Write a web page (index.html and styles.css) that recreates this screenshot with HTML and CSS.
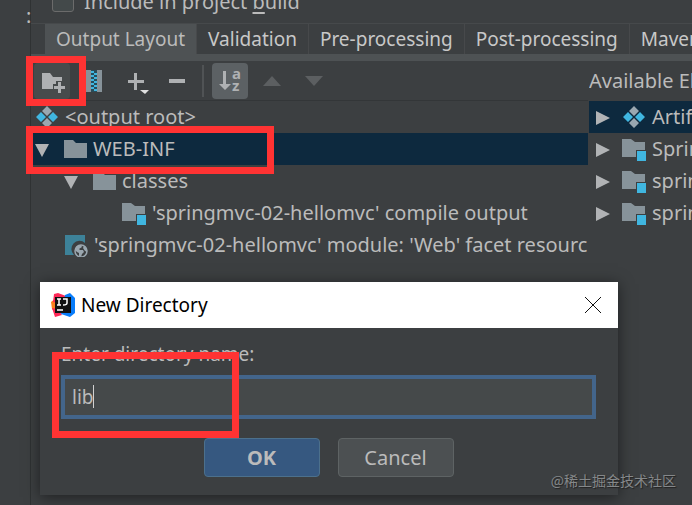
FILE: index.html
```html
<!DOCTYPE html>
<html lang="en">
<head>
    <meta charset="UTF-8">
    <meta name="viewport" content="width=device-width, initial-scale=1.0">
    <title>Project Structure</title>
    <link rel="stylesheet" href="styles.css">
</head>
<body>
    <svg class="sprite" aria-hidden="true">
        <symbol id="folder" viewBox="0 0 24 24">
            <path fill="#87939a" d="M1 3h9l3 3h11v15H1z"/>
        </symbol>
        <symbol id="module" viewBox="0 0 24 24">
            <path fill="#87939a" d="M0 2h9l4 3h10v8h-9v7H0z"/>
            <path fill="#40b6e0" d="M15 14h9v10h-9z"/>
        </symbol>
        <symbol id="artifact" viewBox="0 0 24 24">
            <path fill="#9aa7b0" d="M12 1l5 5-5 5-5-5zM12 13l5 5-5 5-5-5z"/>
            <path fill="#40b6e0" d="M6 7l5 5-5 5-5-5zM18 7l5 5-5 5-5-5z"/>
        </symbol>
        <symbol id="facet" viewBox="0 0 24 24">
            <path fill="#3d8299" d="M1 2h20v8a8 8 0 0 0-11 12H1z"/>
            <circle cx="17" cy="18" r="6" fill="#3c3f41" stroke="#9aa7b0" stroke-width="1.5"/>
            <path fill="#9aa7b0" d="M11 17l2-4 4-1 1 2-3 2 1 1h3l1 2-2 2-1 3-2-1v-3l-2-1zM20 13l3 3v3l-2-1-2-3z"/>
        </symbol>
        <symbol id="down" viewBox="0 0 14 16">
            <path fill="#b1b3b5" d="M0 3h14L7 16z"/>
        </symbol>
        <symbol id="right" viewBox="0 0 14 16">
            <path fill="#b1b3b5" d="M0 2l14 7-14 7z"/>
        </symbol>
    </svg>

    <main class="editor">
        <label class="include"><input type="checkbox"> <span>Include in project <u>b</u>uild</span></label>

        <nav class="tabs">
            <a class="tab active" href="#layout">Output Layout</a>
            <a class="tab" href="#validation">Validation</a>
            <a class="tab" href="#pre">Pre-processing</a>
            <a class="tab" href="#post">Post-processing</a>
            <a class="tab" href="#maven">Maven</a>
        </nav>

        <div class="columns">
            <section class="output">
                <div class="toolbar">
                    <button class="tool hovered" aria-label="Create directory">
                        <svg width="24" height="24" viewBox="0 0 24 24"><path fill="#afb1b3" d="M2 4h8l3 4h9v4h-6v3h-3v5H2zM18 13h3v4h4v3h-4v4h-3v-4h-4v-3h4z"/></svg>
                    </button>
                    <button class="tool" aria-label="Create archive">
                        <svg width="18" height="24" viewBox="0 0 18 24">
                            <path fill="#87939a" d="M1 1h5v22H1zM12 1h5v22h-5z"/>
                            <path fill="#294c59" d="M6 1h6v22H6z"/>
                            <path fill="#40b6e0" d="M6 2h3v2H6zM9 4h3v2H9zM6 6h3v2H6zM9 8h3v2H9zM6 10h3v2H6zM9 12h3v2H9zM6 14h3v2H6zM9 16h3v2H9zM6 18h3v2H6zM9 20h3v2H9z"/>
                        </svg>
                    </button>
                    <button class="tool" aria-label="Add copy of">
                        <svg width="26" height="28" viewBox="0 0 26 28"><path fill="#afb1b3" d="M11 6h3v7h7v3h-7v7h-3v-7H5v-3h6z"/><path fill="#e0e0e0" d="M17 23h9l-4 4z"/></svg>
                    </button>
                    <button class="tool" aria-label="Remove">
                        <svg width="18" height="18" viewBox="0 0 18 18"><path fill="#afb1b3" d="M0 7h16v4H0z"/></svg>
                    </button>
                    <span class="separator"></span>
                    <button class="tool pressed" aria-label="Sort by names and types">
                        <svg width="24" height="24" viewBox="0 0 24 24">
                            <path fill="#afb1b3" d="M5 2h3v13h5l-6 6-6-6h4z"/>
                            <text class="sort-letter" x="14" y="10">a</text>
                            <text class="sort-letter" x="14" y="22">z</text>
                        </svg>
                    </button>
                    <button class="tool" aria-label="Move up">
                        <svg width="18" height="10" viewBox="0 0 18 10"><path fill="#5c5f61" d="M9 0l9 10H0z"/></svg>
                    </button>
                    <button class="tool" aria-label="Move down">
                        <svg width="18" height="10" viewBox="0 0 18 10"><path fill="#5c5f61" d="M0 0h18l-9 10z"/></svg>
                    </button>
                </div>
                <ul class="tree">
                    <li class="row"><svg class="icon"><use href="#artifact"/></svg>&lt;output root&gt;</li>
                    <li class="row selected"><svg class="arrow"><use href="#down"/></svg><svg class="icon"><use href="#folder"/></svg>WEB-INF</li>
                    <li class="row level-1"><svg class="arrow"><use href="#down"/></svg><svg class="icon"><use href="#folder"/></svg>classes</li>
                    <li class="row level-3"><svg class="icon"><use href="#module"/></svg>'springmvc-02-hellomvc' compile output</li>
                    <li class="row level-1"><svg class="icon"><use href="#facet"/></svg>'springmvc-02-hellomvc' module: 'Web' facet resources</li>
                </ul>
            </section>

            <section class="available">
                <h2 class="heading">Available Elements</h2>
                <ul class="tree">
                    <li class="row selected"><svg class="arrow"><use href="#right"/></svg><svg class="icon"><use href="#artifact"/></svg>Artifacts</li>
                    <li class="row"><svg class="arrow"><use href="#right"/></svg><svg class="icon"><use href="#module"/></svg>SpringMVC</li>
                    <li class="row"><svg class="arrow"><use href="#right"/></svg><svg class="icon"><use href="#module"/></svg>springmvc-01</li>
                    <li class="row"><svg class="arrow"><use href="#right"/></svg><svg class="icon"><use href="#module"/></svg>springmvc-02</li>
                </ul>
            </section>
        </div>
    </main>

    <form class="dialog" role="dialog" aria-labelledby="dialog-title">
        <header class="title-bar">
            <svg width="24" height="24" viewBox="0 0 24 24" aria-hidden="true">
                <path fill="#fc801d" d="M0 9l5-4 4 7-5 7-3-3z"/>
                <path fill="#fe2857" d="M3 1l4-1 8 3-4 8-9-2zM1 15l6 1 4 6-7 2z"/>
                <path fill="#087cfa" d="M14 2l5-2 5 5v15l-5 4-9-3z"/>
                <path fill="#111" d="M4 4h16v16H4z"/>
                <path fill="none" stroke="#fff" stroke-width="1.5" d="M6 6h4M8 6v6M6 12h4M12 6h4v4q0 2-4 2M6 17h6"/>
            </svg>
            <h1 class="title" id="dialog-title">New Directory</h1>
            <button class="close" type="button" aria-label="Close">
                <svg width="16" height="16" viewBox="0 0 16 16"><path stroke="#111" d="M0 0l16 16M16 0L0 16"/></svg>
            </button>
        </header>
        <div class="dialog-body">
            <label for="directory">Enter directory name:</label>
            <input class="name-input" id="directory" type="text" value="lib">
            <div class="actions">
                <button class="btn primary" type="submit">OK</button>
                <button class="btn" type="button">Cancel</button>
            </div>
        </div>
        <span class="caret"></span>
    </form>

    <div class="mark mark-tool"></div>
    <div class="mark mark-folder"></div>
    <div class="mark mark-input"></div>
    <span class="edge">:</span>
    <p class="watermark">@稀土掘金技术社区</p>
</body>
</html>
```
FILE: styles.css
```css
* {
    box-sizing: border-box;
}
body {
    margin: 0;
    min-height: 100vh;
    display: flex;
    overflow: hidden;
    position: relative;
    background-color: #3c3f41;
    color: #bbbbbb;
    font-family: "Noto Sans", "Noto Sans CJK SC", sans-serif;
    font-size: 20px;
    line-height: 32px;
}
button, input {
    font: inherit;
    color: inherit;
}
button {
    padding: 0;
    border: none;
    background: none;
}
svg {
    flex: none;
}
.sprite {
    position: absolute;
    width: 0;
    height: 0;
}
.editor {
    flex: 1;
    min-width: 0;
    min-height: 100vh;
    margin-left: 30px;
    border-left: 1px solid #2f3233;
}
.include {
    display: flex;
    align-items: flex-end;
    gap: 10px;
    height: 23px;
    padding: 0 21px 11px;
    line-height: 24px;
    white-space: nowrap;
}
.include span {
    margin-bottom: -2px;
}
.include input {
    appearance: none;
    flex: none;
    width: 22px;
    height: 22px;
    margin: 0;
    border: 1px solid #6b6b6b;
    border-radius: 3px;
    background-color: #43494a;
}
.include u {
    text-underline-offset: 3px;
}

/* Tabs */
.tabs {
    display: flex;
    height: 38px;
    padding-left: 14px;
    overflow: hidden;
    border-top: 1px solid #46494b;
    border-bottom: 7px solid #4e5254;
    font-size: 19px;
}
.tab {
    padding: 0 11px;
    border-right: 1px solid #47494b;
    color: #c8c8c8;
    text-decoration: none;
    white-space: nowrap;
    line-height: 30px;
}
.tab.active {
    background-color: #4e5254;
    color: #bbbbbb;
}

.columns {
    display: grid;
    grid-template-columns: minmax(0, 557fr) minmax(0, 103fr);
    column-gap: 1px;
}
.toolbar {
    display: flex;
    align-items: center;
    gap: 6px;
    height: 40px;
    padding: 0 3px;
    border-bottom: 1px solid #333638;
}
.tool {
    display: flex;
    align-items: center;
    justify-content: center;
    width: 36px;
    height: 36px;
    border-radius: 4px;
}
.tool svg {
    overflow: visible;
}
.hovered {
    background-color: #474b4c;
}
.pressed {
    background-color: #5c6164;
}
.sort-letter {
    fill: #afb1b3;
    font-size: 15px;
    font-weight: bold;
}
.separator {
    width: 4px;
    height: 32px;
    border-left: 2px solid #505355;
}
.heading {
    height: 40px;
    margin: 0;
    padding-top: 4px;
    overflow: hidden;
    font-size: 20px;
    font-weight: normal;
    white-space: nowrap;
}

/* Trees */
.tree {
    margin: 0;
    padding: 0;
    list-style: none;
}
.row {
    display: flex;
    align-items: center;
    height: 32px;
    padding-left: 4px;
    overflow: hidden;
    white-space: nowrap;
}
.selected {
    background-color: #0d293e;
}
.level-1 {
    padding-left: 33px;
}
.level-3 {
    padding-left: 91px;
}
.arrow {
    width: 14px;
    height: 16px;
    margin-right: 14px;
}
.icon {
    width: 24px;
    height: 24px;
    margin-right: 6px;
}
.available .row {
    padding-left: 7px;
}
.available .arrow {
    margin-right: 12px;
}

/* Dialog window */
.dialog {
    position: absolute;
    top: 282px;
    left: 40px;
    right: 74px;
    background-color: #3c3f41;
    box-shadow: 0 2px 14px rgba(0, 0, 0, 0.5);
    font-size: 19px;
}
.title-bar {
    display: flex;
    align-items: center;
    gap: 6px;
    height: 46px;
    padding: 0 17px 0 11px;
    background-color: #fff;
    color: #000;
}
.title {
    flex: 1;
    margin: 0;
    font-size: 19px;
    font-weight: normal;
}
.close {
    display: flex;
}
.dialog-body {
    display: flex;
    flex-direction: column;
    padding: 10px 22px 18px 21px;
}
.name-input {
    height: 44px;
    margin-top: 5px;
    padding: 0 7px;
    border: 4px solid #43658b;
    background-color: #45494a;
    outline: none;
}
.actions {
    display: flex;
    justify-content: center;
    gap: 18px;
    margin-top: 19px;
}
.btn {
    width: 116px;
    height: 39px;
    border: 1px solid #5e6364;
    border-radius: 4px;
    background-color: #4c5052;
    font-size: 20px;
}
.primary {
    border-color: #4c708c;
    background-color: #365880;
    font-weight: bold;
}
.caret {
    position: absolute;
    top: 103px;
    left: 53px;
    width: 1px;
    height: 23px;
    background-color: #d0d0d0;
}

/* Red outlines drawn over the windows */
.mark {
    position: absolute;
    border: 7px solid #ff3333;
}
.mark-tool {
    top: 56px;
    left: 26px;
    width: 60px;
    height: 50px;
}
.mark-folder {
    top: 126px;
    left: 26px;
    width: 248px;
    height: 48px;
}
.mark-input {
    top: 352px;
    left: 52px;
    width: 187px;
    height: 86px;
}
.edge {
    position: absolute;
    top: 0;
    left: 26px;
}
.watermark {
    position: absolute;
    right: 16px;
    bottom: 9px;
    margin: 0;
    color: #85888a;
    font-family: "Noto Sans CJK SC", sans-serif;
    font-size: 14px;
    text-shadow: 1px 1px 1px #222;
}
```
